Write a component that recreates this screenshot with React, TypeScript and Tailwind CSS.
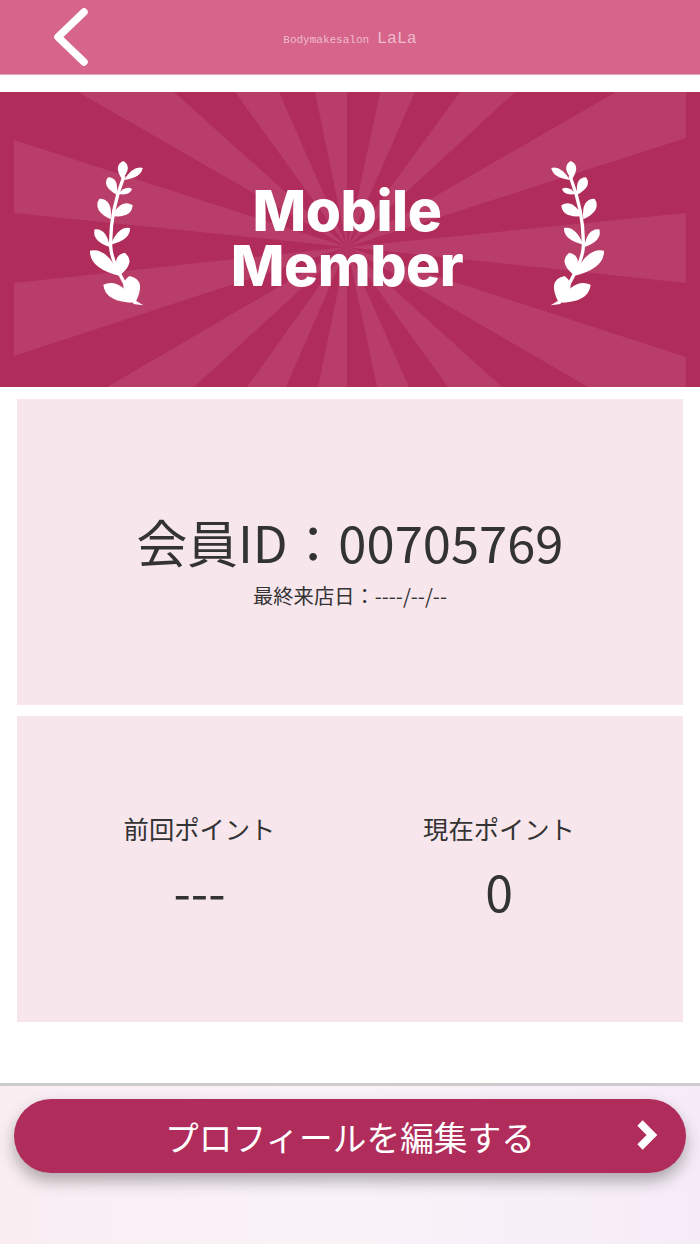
import React from "react";

const leaves: [number, number, number, number, number][] = [
  [126, 88, 130, 33, 30],
  [132, 90, 188, 54, 22],
  [110, 134, 84, 82, 30],
  [114, 132, 156, 117, 18],
  [92, 208, 58, 146, 36],
  [94, 198, 158, 166, 34],
  [90, 292, 44, 238, 30],
  [92, 284, 150, 234, 28],
  [120, 378, 30, 302, 42],
  [120, 376, 134, 308, 40],
  [166, 458, 70, 404, 44],
  [166, 458, 148, 378, 50],
];

function leafPath([x1, y1, x2, y2, w]: [number, number, number, number, number]) {
  const dx = x2 - x1;
  const dy = y2 - y1;
  const len = Math.hypot(dx, dy);
  const nx = (-dy / len) * w;
  const ny = (dx / len) * w;
  const c1 = [x1 + dx * 0.72 + nx, y1 + dy * 0.72 + ny];
  const c2 = [x1 + dx * 0.72 - nx, y1 + dy * 0.72 - ny];
  return `M${x1} ${y1}Q${c1[0]} ${c1[1]} ${x2} ${y2}Q${c2[0]} ${c2[1]} ${x1} ${y1}Z`;
}

function Laurel({ flip }: { flip?: boolean }) {
  return (
    <svg viewBox="0 0 225 495" className={flip ? "h-[165px] w-[75px] -scale-x-100" : "h-[165px] w-[75px]"}>
      <path d="M132 78C108 140 90 220 92 290C94 330 120 375 150 430" fill="none" stroke="#fff" strokeWidth="10" />
      <path d="M160 448L190 466L160 462Z" fill="#fff" />
      {leaves.map((l, i) => (
        <path key={i} d={leafPath(l)} fill="#fff" />
      ))}
    </svg>
  );
}

const rays = [
  "78,92 174,92",
  "235,92 279,92",
  "315,92 347,92",
  "380,92 415,92",
  "460,92 515,92",
  "616,92 686,92 686,138",
  "686,213 686,283",
  "686,357 686,387 588,387",
  "502,387 448,387",
  "409,387 377,387",
  "347,387 318,387",
  "286,387 247,387",
  "194,387 107,387",
  "14,356 14,283",
  "14,213 14,140",
];

function Sunburst() {
  return (
    <svg className="absolute inset-0 h-full w-full" viewBox="0 92 700 295" preserveAspectRatio="none">
      {rays.map((r, i) => (
        <polygon key={i} points={`347,247 ${r}`} fill="#b93d69" />
      ))}
    </svg>
  );
}

export default function App() {
  return (
    <div
      className="flex h-[1244px] w-[700px] flex-col overflow-hidden bg-white text-[#333333]"
      style={{ fontFamily: '"Noto Sans CJK JP", "Noto Sans", sans-serif' }}
    >
      <header className="relative flex h-[75px] items-center justify-center border-b border-[#e4a5bb] bg-[#d6648b] pt-[4px]">
        <svg className="absolute left-[50px] top-[4px] h-[66px] w-[44px]" viewBox="0 0 44 66">
          <path d="M34 8L8 33L34 58" fill="none" stroke="#fff" strokeWidth="7.5" strokeLinecap="round" strokeLinejoin="round" />
        </svg>
        <div className="flex items-baseline gap-[8px] text-[#eebccd]" style={{ fontFamily: '"Liberation Mono", monospace' }}>
          <span className="text-[11px]">Bodymakesalon</span>
          <span className="text-[16.5px]">LaLa</span>
        </div>
      </header>

      <section className="relative mt-[17px] flex h-[295px] justify-between bg-[#b02c5a] pl-[80px] pr-[86px] pt-[58px]">
        <Sunburst />
        <div className="relative">
          <Laurel />
        </div>
        <div
          className="relative pt-[33px] text-center text-[57px] font-extrabold leading-[55px] tracking-[-0.5px] text-white"
          style={{ fontFamily: '"Inter", sans-serif' }}
        >
          Mobile
          <br />
          Member
        </div>
        <div className="relative">
          <Laurel flip />
        </div>
      </section>

      <main className="flex flex-col gap-[11px] px-[17px] pt-[12px]">
        <div className="flex h-[306px] flex-col items-center bg-[#f8e6ed] pt-[107px]">
          <div className="text-[50.7px] leading-[70px]">会員ID：00705769</div>
          <div className="mt-[4px] text-[20.3px] leading-[30px]">最終来店日：----/--/--</div>
        </div>
        <div className="grid h-[306px] grid-cols-2 bg-[#f8e6ed] pt-[94px] text-center">
          <div className="flex flex-col items-center pl-[32px]">
            <div className="text-[25.3px] leading-[36px]">前回ポイント</div>
            <div className="mt-[8px] text-[50px] leading-[72px]">---</div>
          </div>
          <div className="flex flex-col items-center pr-[35px]">
            <div className="text-[25.3px] leading-[36px]">現在ポイント</div>
            <div className="mt-[8px] text-[50px] leading-[72px]">0</div>
          </div>
        </div>
      </main>

      <footer className="mt-[61px] flex-1 border-t-[3px] border-[#cccccc] bg-gradient-to-r from-[#f9edf2] via-[#f9f3f8] to-[#f6ecf8] px-[14px] pt-[13px]">
        <button className="relative flex h-[74px] w-full items-center justify-center rounded-full bg-[#b02c5a] pt-[3px] text-[33.7px] text-white shadow-[0_8px_16px_rgba(0,0,0,0.3)]">
          プロフィールを編集する
          <svg className="absolute right-[26px] top-[19px] h-[34px] w-[26px]" viewBox="0 0 26 34">
            <path d="M6 5L18 17L6 29" fill="none" stroke="#fff" strokeWidth="7.5" />
          </svg>
        </button>
      </footer>
    </div>
  );
}
